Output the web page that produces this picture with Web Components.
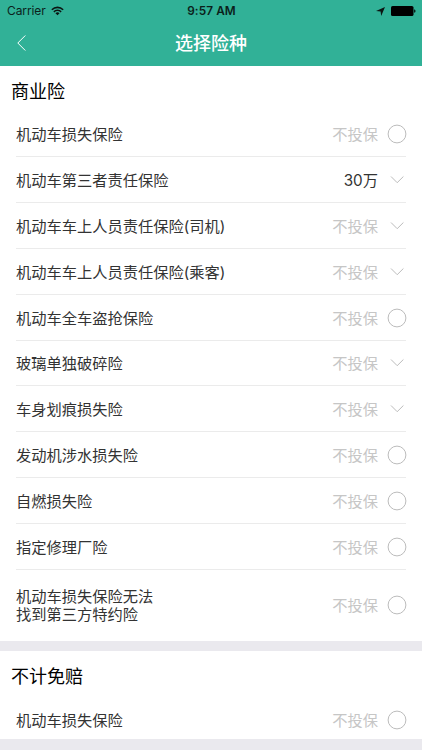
<!DOCTYPE html>
<html lang="zh-CN">
<head>
<meta charset="utf-8">
<meta name="viewport" content="width=device-width, initial-scale=1">
<title>选择险种</title>
<style>
  body {
    margin: 0;
    background: #fff;
    font-family: Inter, "Noto Sans CJK SC", sans-serif;
    --brand: #31b197;
    --muted: #c6c6c6;
    --line: #ebebeb;
    --gap-color: #eae9ee;
  }
</style>
</head>
<body>
<insurance-page>
  <status-bar slot="top"></status-bar>
  <nav-bar slot="top">选择险种</nav-bar>

  <insurance-group>
    <span slot="title">商业险</span>
    <insurance-item type="radio" value="不投保">机动车损失保险</insurance-item>
    <insurance-item type="select" value="30万" selected>机动车第三者责任保险</insurance-item>
    <insurance-item type="select" value="不投保">机动车车上人员责任保险(司机)</insurance-item>
    <insurance-item type="select" value="不投保">机动车车上人员责任保险(乘客)</insurance-item>
    <insurance-item type="radio" value="不投保">机动车全车盗抢保险</insurance-item>
    <insurance-item type="select" value="不投保">玻璃单独破碎险</insurance-item>
    <insurance-item type="select" value="不投保">车身划痕损失险</insurance-item>
    <insurance-item type="radio" value="不投保">发动机涉水损失险</insurance-item>
    <insurance-item type="radio" value="不投保">自燃损失险</insurance-item>
    <insurance-item type="radio" value="不投保">指定修理厂险</insurance-item>
    <insurance-item type="radio" value="不投保" tall>机动车损失保险无法<br>找到第三方特约险</insurance-item>
  </insurance-group>

  <insurance-group>
    <span slot="title">不计免赔</span>
    <insurance-item type="radio" value="不投保">机动车损失保险</insurance-item>
  </insurance-group>
</insurance-page>

<script>
class InsurancePage extends HTMLElement {
  constructor() {
    super();
    this.attachShadow({ mode: 'open' }).innerHTML = `
      <style>
        :host {
          display: flex;
          flex-direction: column;
          height: 100vh;
          overflow: hidden;
        }
        header {
          flex: none;
          height: 65.6px;
          background: var(--brand);
        }
        main {
          flex: 1;
          min-height: 0;
          overflow: hidden;
          display: flex;
          flex-direction: column;
          gap: 10px;
          background: var(--gap-color);
        }
        footer {
          flex: none;
          height: 10.6px;
          background: var(--gap-color);
        }
      </style>
      <header><slot name="top"></slot></header>
      <main><slot></slot></main>
      <footer></footer>
    `;
  }
}

class StatusBar extends HTMLElement {
  constructor() {
    super();
    this.attachShadow({ mode: 'open' }).innerHTML = `
      <style>
        :host {
          display: grid;
          grid-template-columns: 1fr auto 1fr;
          align-items: center;
          height: 22px;
          padding: 0 6px 0 7px;
          color: #0b1f1b;
          font-size: 12px;
          line-height: 22px;
        }
        .left, .right { display: flex; align-items: center; }
        .left { gap: 5px; letter-spacing: -.1px; }
        .right { justify-content: flex-end; gap: 6px; }
        .time { font-weight: 600; font-size: 11.8px; letter-spacing: .1px; }
        svg { display: block; }
      </style>
      <div class="left">
        <span>Carrier</span>
        <svg width="13" height="10" viewBox="0 0 14 10" fill="none" stroke="#0b1512" stroke-width="1.7">
          <path d="M.9 3.6a8.7 8.7 0 0 1 12.2 0M3.1 5.9a5.5 5.5 0 0 1 7.8 0"/>
          <path d="M7 9.6 4.8 7.4a3.1 3.1 0 0 1 4.4 0z" fill="#0b1512" stroke="none"/>
        </svg>
      </div>
      <span class="time">9:57 AM</span>
      <div class="right">
        <svg width="9" height="9" viewBox="0 0 9 9"><path d="M9 0 5.2 9 4.6 4.6 0 4z" fill="#0b1512"/></svg>
        <svg width="25" height="10" viewBox="0 0 25 10">
          <rect width="22.5" height="10" rx="1.6"/>
          <path d="M23.2 3.2a1.9 1.9 0 0 1 0 3.6z"/>
        </svg>
      </div>
    `;
  }
}

class NavBar extends HTMLElement {
  constructor() {
    super();
    this.attachShadow({ mode: 'open' }).innerHTML = `
      <style>
        :host {
          display: grid;
          grid-template-columns: 1fr auto 1fr;
          align-items: center;
          height: 42px;
          padding: 0 17px;
          color: #fff;
        }
        h1 {
          margin: 0;
          padding-top: 2px;
          font-size: 18px;
          font-weight: 500;
          line-height: 40px;
        }
        svg { display: block; }
      </style>
      <svg width="9" height="16" viewBox="0 0 9 16" fill="none" stroke="#fff" stroke-width="1">
        <path d="M8.3.5.8 8l7.5 7.5"/>
      </svg>
      <h1><slot></slot></h1>
    `;
  }
}

class InsuranceGroup extends HTMLElement {
  constructor() {
    super();
    this.attachShadow({ mode: 'open' }).innerHTML = `
      <style>
        :host {
          display: block;
          flex: none;
          background: #fff;
        }
        h2 {
          margin: 0;
          padding: 3px 11px 0;
          height: 43px;
          font-size: 18px;
          font-weight: 400;
          line-height: 46px;
          color: #000;
        }
        .items { padding: 0 16px; }
      </style>
      <h2><slot name="title"></slot></h2>
      <div class="items"><slot></slot></div>
    `;
  }
}

const marks = {
  radio: '<svg width="20" height="20" viewBox="0 0 20 20"><circle cx="10" cy="10" r="8.9"/></svg>',
  select: '<svg width="20" height="20" viewBox="0 0 20 20"><path d="M4 6.5l6.2 6.2 6.2-6.2"/></svg>',
};

class InsuranceItem extends HTMLElement {
  constructor() {
    super();
    this.attachShadow({ mode: 'open' });
  }

  connectedCallback() {
    this.render();
  }

  render() {
    this.shadowRoot.innerHTML = `
      <style>
        :host {
          display: flex;
          align-items: center;
          box-sizing: border-box;
          height: 45.8px;
          padding-top: 1px;
          border-bottom: 1px solid var(--line);
          font-size: 15.25px;
          line-height: 18.3px;
          color: #333;
        }
        :host([tall]) { height: 71.2px; }
        :host(:last-child) { border-bottom-color: transparent; }
        .label { flex: 1; padding-top: 2px; }
        .value { color: var(--muted); margin-right: 9px; padding-top: 2px; }
        :host([selected]) .value { color: #333; }
        svg {
          display: block;
          margin-right: -1px;
          fill: none;
          stroke: #bcbcbc;
          stroke-width: 1;
        }
      </style>
      <span class="label"><slot></slot></span>
      <span class="value">${this.getAttribute('value')}</span>
      ${marks[this.getAttribute('type')]}
    `;
  }
}

customElements.define('insurance-page', InsurancePage);
customElements.define('status-bar', StatusBar);
customElements.define('nav-bar', NavBar);
customElements.define('insurance-group', InsuranceGroup);
customElements.define('insurance-item', InsuranceItem);
</script>
</body>
</html>
